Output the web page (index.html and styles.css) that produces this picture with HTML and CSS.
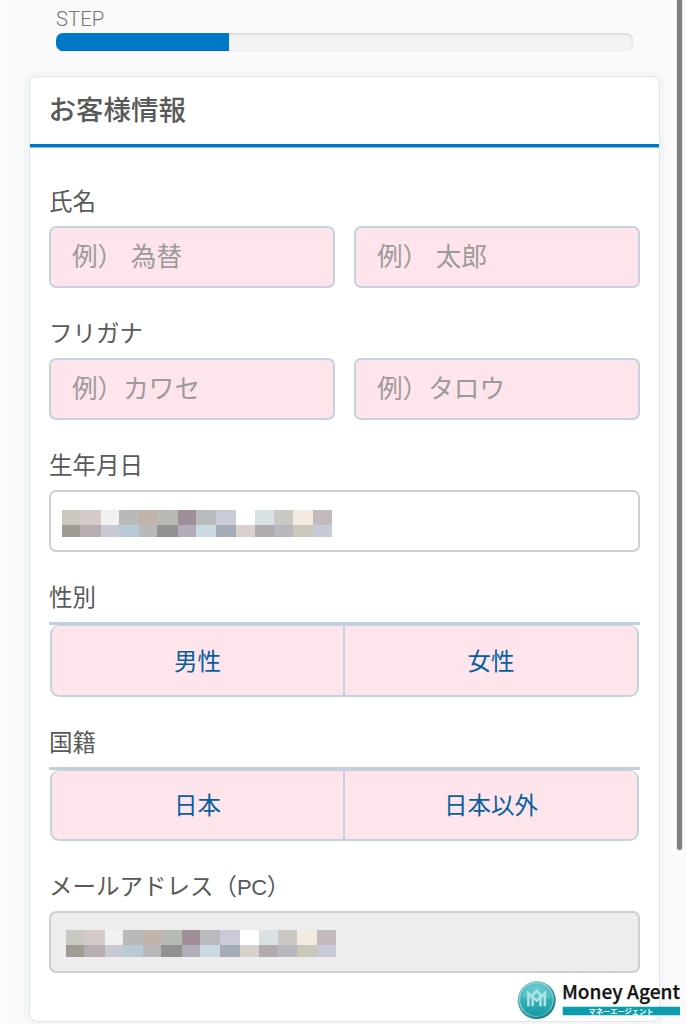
FILE: index.html
```html
<!DOCTYPE html>
<html lang="ja">
<head>
<meta charset="utf-8">
<title>お客様情報</title>
<link rel="stylesheet" href="styles.css">
</head>
<body>
<div class="page">
  <div class="steps">
    <div class="steps-label">STEP</div>
    <div class="progress"><div class="progress-bar" style="width:30%"></div></div>
  </div>
  <form class="card">
    <h1 class="card-title">お客様情報</h1>
    <div class="card-body">
      <section class="field">
        <div class="label">氏名</div>
        <div class="pair">
          <input class="input required" type="text" placeholder="例）&nbsp; 為替">
          <input class="input required" type="text" placeholder="例）&nbsp; 太郎">
        </div>
      </section>
      <section class="field">
        <div class="label">フリガナ</div>
        <div class="pair">
          <input class="input required kana" type="text" placeholder="例）カワセ">
          <input class="input required kana" type="text" placeholder="例）タロウ">
        </div>
      </section>
      <section class="field">
        <div class="label">生年月日</div>
        <div class="input masked">
          <svg class="mosaic" viewBox="0 0 14 27" preserveAspectRatio="none" shape-rendering="crispEdges">
            <defs>
              <g id="mosaic">
                <path fill="#cbc8c1" d="M0 0h1v15H0z"/><path fill="#d4cbc9" d="M.93 0h1.07v15H.93z"/><path fill="#f1f1f1" d="M2 0h1v15H2z"/><path fill="#b8b9b9" d="M2.95 0H4v15H2.95z"/><path fill="#c3b4ab" d="M4 0h1v15H4z"/><path fill="#b8bab4" d="M4.93 0H6v15H4.93z"/><path fill="#9e8f98" d="M6 0h1v15H6z"/><path fill="#b9babd" d="M6.97 0H8v15H6.97z"/><path fill="#c9cbd9" d="M8 0h1v15H8z"/><path fill="#fff" d="M9 0h1v15H9z"/><path fill="#d9e1e4" d="M10 0h1v15h-1z"/><path fill="#cac8c3" d="M11 0h1v15h-1z"/><path fill="#f3ebe1" d="M12 0h1v15h-1z"/><path fill="#c2babd" d="M13 0h1v15h-1z"/>
                <path fill="#a09b93" d="M0 15h1v12H0z"/><path fill="#b9adb4" d="M.93 15H2v12H.93z"/><path fill="#c9cad1" d="M2 15h1v12H2z"/><path fill="#b9c9d5" d="M2.95 15H4v12H2.95z"/><path fill="#b8b9b9" d="M4 15h1v12H4z"/><path fill="#909191" d="M4.93 15H6v12H4.93z"/><path fill="#b3adba" d="M6 15h1v12H6z"/><path fill="#cbd9e2" d="M6.97 15H8v12H6.97z"/><path fill="#a5acb5" d="M8 15h1v12H8z"/><path fill="#d9cfcd" d="M9 15h1v12H9z"/><path fill="#b1abb0" d="M10 15h1v12h-1z"/><path fill="#b8b6bf" d="M11 15h1v12h-1z"/><path fill="#cac7bb" d="M12 15h1v12h-1z"/><path fill="#c8cad9" d="M13 15h1v12h-1z"/>
              </g>
            </defs>
            <use href="#mosaic"/>
          </svg>
        </div>
      </section>
      <section class="field">
        <div class="label">性別</div>
        <div class="choices"><div class="choice-box"><span class="choice">男性</span><span class="choice">女性</span></div></div>
      </section>
      <section class="field">
        <div class="label">国籍</div>
        <div class="choices compact"><div class="choice-box"><span class="choice">日本</span><span class="choice">日本以外</span></div></div>
      </section>
      <section class="field">
        <div class="label">メールアドレス（<span class="latin">PC</span>）</div>
        <div class="input masked disabled">
          <svg class="mosaic" viewBox="0 0 14 27" preserveAspectRatio="none" shape-rendering="crispEdges"><use href="#mosaic"/></svg>
        </div>
      </section>
    </div>
  </form>
</div>
<div class="scroll-thumb"></div>
<svg class="brand" width="170" height="44" viewBox="515 978 170 44">
  <defs>
    <linearGradient id="coin" x1="0" y1="0" x2="0" y2="1">
      <stop offset="0" stop-color="#63c6ca"/><stop offset=".5" stop-color="#35afb5"/><stop offset="1" stop-color="#159ba5"/>
    </linearGradient>
    <linearGradient id="rim" x1="0" y1="0" x2="1" y2="1">
      <stop offset="0" stop-color="#8dced1"/><stop offset=".45" stop-color="#3b9ca3"/><stop offset="1" stop-color="#14737c"/>
    </linearGradient>
  </defs>
  <circle cx="536.7" cy="1000.2" r="19" fill="url(#rim)"/>
  <circle cx="536.3" cy="999.2" r="17.5" fill="#82d1d4"/>
  <circle cx="536.5" cy="999.7" r="16.2" fill="url(#coin)"/>
  <path d="M522 997a15 15 0 0 1 29 0q-14 6-29 0z" fill="#7bd0d2" opacity=".45"/>
  <g fill="none" stroke="#b0e5e6" stroke-width="2.5">
    <path d="M528.4 1006.3v-13l8.2 7.3 8.2-7.3v13"/>
    <path d="M532.7 1006.3v-11l3.9-4.6 3.9 4.6v11"/>
  </g>
  <text class="brand-name" x="562" y="999" textLength="118" lengthAdjust="spacingAndGlyphs">Money Agent</text>
  <path fill="#0b9dad" d="M562.7 1006.7H680v8.6H562.7z"/>
  <text class="brand-kana" x="588.5" y="1013.6" textLength="65" lengthAdjust="spacingAndGlyphs">マネーエージェント</text>
</svg>
</body>
</html>
```
FILE: styles.css
```css
* { box-sizing: border-box; }

body {
  margin: 0;
  height: 1024px;
  overflow: hidden;
  position: relative;
  background: #fafafa;
  border-left: 1px solid #fff;
  color: #595959;
  font-family: "Liberation Sans", "Noto Sans CJK JP", sans-serif;
}

.page {
  display: flex;
  flex-direction: column;
  padding: 8px 27px 0 28px;
}

.steps {
  padding: 0 27px;
  height: 68px;
}

.steps-label {
  height: 25px;
  line-height: 23px;
  font-family: Roboto, sans-serif;
  font-weight: 300;
  font-size: 20.3px;
  color: #757575;
}

.progress {
  width: 577px;
  height: 18px;
  border-radius: 7px;
  overflow: hidden;
  background: #f3f3f3;
  box-shadow: inset 0 1px 3px rgba(0, 0, 0, .16);
}

.progress-bar {
  height: 100%;
  background: #0078ca;
  box-shadow: inset 0 -1px 0 #0067b1;
}

.card {
  height: 946px;
  background: #fff;
  border: 1px solid #dfe7ed;
  border-radius: 8px;
  box-shadow: 0 0 0 5px #f4f5f6;
}

.card-title {
  margin: 0;
  height: 70px;
  padding-left: 18.5px;
  line-height: 68px;
  font-size: 27.5px;
  font-weight: 500;
  border-bottom: 3px solid #0078ca;
  box-shadow: 0 1px 0 #7dbbe4;
}

.card-body {
  padding: 9px 19px 0;
}

.field { padding-top: 30px; }

.label {
  height: 30px;
  margin-bottom: 10px;
  line-height: 32px;
  font-size: 23.5px;
}

.latin {
  font-size: 22px;
  letter-spacing: -.4px;
}

.pair {
  display: grid;
  grid-template-columns: 286px 286px;
  justify-content: space-between;
}

.input {
  display: block;
  width: 100%;
  min-width: 0;
  height: 62px;
  padding: 0 21px 5px;
  border: 2px solid #cfcfcf;
  border-radius: 7px;
  background: #fff;
  font: 25.6px "Noto Sans CJK JP", sans-serif;
  outline: none;
}

.required {
  background: #fee5eb;
  border-color: #c6d3df;
}

.required:not(.kana) { word-spacing: -1.9px; }

.input::placeholder { color: #9c9a9a; opacity: 1; }

.masked { padding: 18px 11px; }

.disabled {
  padding: 17px 15px;
  background: #ededed;
}

.mosaic {
  display: block;
  width: 270px;
  height: 27px;
}

.choices {
  height: 75px;
  padding: 0 1px;
  border-top: 3px solid #c1d0dc;
}

.compact { height: 74px; }

.choice-box {
  display: grid;
  grid-template-columns: 291px 1fr;
  height: 100%;
  border: 2px solid #c5d2dd;
  border-top-width: 1px;
  border-radius: 9px;
  background: #fee5eb;
}

.choice {
  display: flex;
  align-items: center;
  justify-content: center;
  padding-bottom: 2px;
  font-size: 23.5px;
  color: #075f9f;
}

.choice + .choice { border-left: 2px solid #c5d2dd; }

.scroll-thumb {
  position: absolute;
  top: -10px;
  left: 676px;
  width: 5px;
  height: 860px;
  border-radius: 3px;
  background: #7f7f7f;
  box-shadow: 0 0 0 1px #ececec;
}

.brand {
  position: absolute;
  left: 514px;
  top: 978px;
}

.brand-name {
  font: 500 19px "Noto Sans CJK JP", sans-serif;
  fill: #111;
  stroke: #111;
  stroke-width: .25px;
}

.brand-kana {
  font: 700 7.2px "Noto Sans CJK JP", sans-serif;
  fill: #fff;
}
```
